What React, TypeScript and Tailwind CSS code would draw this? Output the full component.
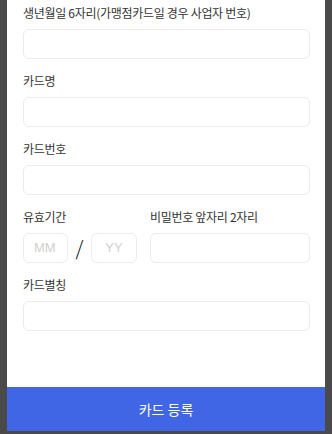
import React from "react";

const font = { fontFamily: '"Noto Sans CJK KR", "Noto Sans", sans-serif' };

function Label({ children }: { children: React.ReactNode }) {
  return <div className="h-[16px] text-[12px] leading-[16px] tracking-[-0.3px] text-[#333333] mb-[8px] whitespace-nowrap">{children}</div>;
}

function Box({ className = "" }: { className?: string }) {
  return <div className={"h-[30px] rounded-[6px] border border-[#ebebeb] bg-white " + className} />;
}

export default function App() {
  return (
    <div className="w-[332px] h-[434px] bg-[#4a4a4a] flex flex-col px-[7px] pb-[3px]" style={font}>
      <div className="flex-1 bg-white pl-[16px] pr-[15px] pt-[5px] flex flex-col">
        <div className="mb-[14px]">
          <Label>생년월일 6자리(가맹점카드일 경우 사업자 번호)</Label>
          <Box />
        </div>
        <div className="mb-[14px]">
          <Label>카드명</Label>
          <Box />
        </div>
        <div className="mb-[14px]">
          <Label>카드번호</Label>
          <Box />
        </div>
        <div className="mb-[14px] flex">
          <div className="flex flex-col">
            <Label>유효기간</Label>
            <div className="flex items-center">
              <div className="w-[45px] h-[30px] rounded-[6px] border border-[#ebebeb] flex items-center pl-[10px] text-[13px] text-[#d0d0d0] overflow-hidden whitespace-nowrap" style={{ fontFamily: '"Liberation Sans", sans-serif' }}>MM</div>
              <div className="w-[23px] text-center text-[20px] leading-[20px] text-black font-light">/</div>
              <div className="w-[46px] h-[30px] rounded-[6px] border border-[#ebebeb] flex items-center justify-center text-[13px] text-[#d0d0d0]" style={{ fontFamily: '"Liberation Sans", sans-serif' }}>YY</div>
            </div>
          </div>
          <div className="flex-1 ml-[13px] flex flex-col">
            <Label>비밀번호 앞자리 2자리</Label>
            <Box />
          </div>
        </div>
        <div>
          <Label>카드별칭</Label>
          <Box />
        </div>
      </div>
      <div className="h-[44px] bg-[#4066e6] flex items-center justify-center text-white text-[14px]">카드 등록</div>
    </div>
  );
}
